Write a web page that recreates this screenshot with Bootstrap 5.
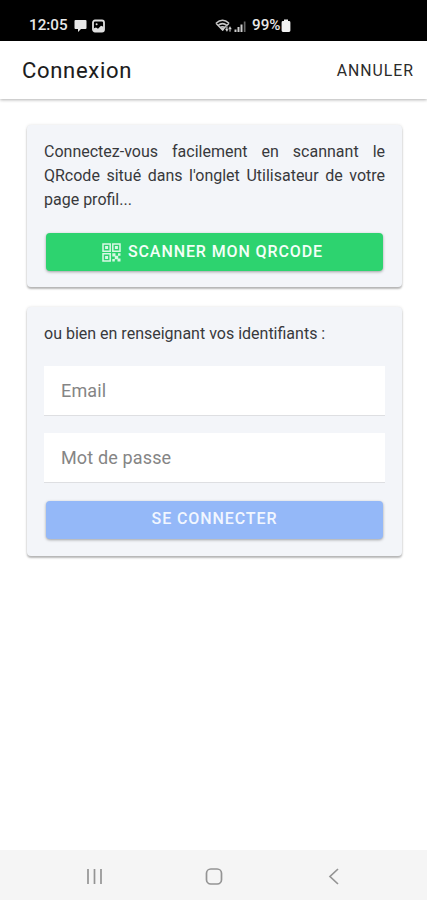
<!DOCTYPE html>
<html lang="fr">
<head>
<meta charset="utf-8">
<meta name="viewport" content="width=device-width, initial-scale=1">
<title>Connexion</title>
<link href="https://cdn.jsdelivr.net/npm/bootstrap@5.3.0/dist/css/bootstrap.min.css" rel="stylesheet">
<style>
body{font-family:Roboto,"Liberation Sans",sans-serif;background:#fff;color:#38393c}
.screen{height:900px}
.status{height:41px;background:#000;color:#e8e8e8;padding:10px 0 0 29px;font-size:15.2px;font-weight:500;line-height:31px}
.status svg,.sysnav svg{display:block;flex:none}
.clock{width:45px}
.signals{margin-left:109px}
.percent{margin:0 1px 0 4px}
.topbar{height:58px;padding:1px 14px 0 22px;box-shadow:0 1px 3px rgba(0,0,0,.3)}
.topbar h1{font-size:22px;font-weight:400;letter-spacing:.7px;color:#1c1c1c;line-height:58px;-webkit-text-stroke:.1px #1c1c1c}
.cancel{font-size:15.8px;letter-spacing:1px;margin-right:-1px;color:#2b2b2b;line-height:58px}
.content{padding:26px 25px 0 27px}
.panel{background:#f3f5f9;border:0;border-radius:4px;padding:15px 17px 17px;box-shadow:0 2px 2px rgba(0,0,0,.26),0 0 3px rgba(0,0,0,.12)}
.panel p{font-size:16px;line-height:24px;margin-bottom:20px}
.panel .justify{text-align:justify}
.intro{padding-bottom:16px}
.intro p{margin-bottom:21px}
.second{margin-top:20px;padding-top:14px}
.second p{padding-top:1px}
.field{height:50px;border:0;border-bottom:1px solid #dedfe2;border-radius:0;background:#fff;padding:0 17px;font-size:18px;letter-spacing:.15px;margin-bottom:17px}
.field::placeholder{color:#858585;opacity:1}
.field + .action{margin-top:1px}
.action{height:38px;margin:0 2px;border:0;border-radius:4px;padding:0;color:#fff;font-size:16px;font-weight:500;letter-spacing:.9px;line-height:36px;box-shadow:0 1px 3px rgba(0,0,0,.35)}
.scan,.scan:hover{background:#2dd36f;color:#f4fff8;padding:0 4px 0 0}
.scan svg{margin-right:7px}
.login,.login:disabled{background:#94b8f8;color:#f1f6ff;opacity:1;padding-bottom:2px;line-height:36px}
.sysnav{height:50px;background:#f5f5f5;padding-top:2px}
</style>
</head>
<body>
<div class="screen d-flex flex-column overflow-hidden">
  <div class="status d-flex align-items-center">
    <span class="clock">12:05</span>
    <svg width="13" height="14" viewBox="0 0 13 14"><path d="M1.500 1h10q1 0 1 1v7q0 1-1 1H7l-3 3v-3H1.500q-1 0-1-1V2q0-1 1-1z" fill="#e8e8e8"/></svg>
    <svg class="ms-1" width="15" height="14" viewBox="0 0 15 14"><rect x="2" y="1.500" width="11" height="11" rx="2" fill="none" stroke="#e0e0e0" stroke-width="1.800"/><path d="M3 12V9.300l2-.8 2 1.200 3-3 2.500 1V12z" fill="#e0e0e0" stroke="none"/><circle cx="5.600" cy="5.200" r="1" fill="#e0e0e0"/></svg>
    <span class="signals d-flex align-items-center">
      <svg width="33" height="16" viewBox="0 0 33 16"><g fill="none" stroke="#c8c8c8" stroke-width="1.500"><path d="M1 5.200q6.500-6 13 0M3 7.600q4.500-4 9 0M5 9.800q2.500-2.200 5 0M1 5.200L7.500 12 14 5.200"/></g><path d="M5 9.500h5L8 13z" fill="#ccc"/><path d="M9.800 10.700h1.400V8.300h1.400v2.400H14L11.900 14zM12.800 11.300L15 8l2 3.300h-1.300v2.500h-1.400v-2.500z" fill="#ddd" stroke="#000" stroke-width=".35"/><path d="M19.500 14v-2.500h2V14zM22.500 14V9h2v5zM25.500 14V6.500h2V14z" fill="#ccc"/><path d="M28.800 14V3.500h1.700V14z" fill="#666"/></svg>
      <span class="percent">99%</span>
      <svg width="10" height="14" viewBox="0 0 10 14"><path d="M3 .5h4V2h1q1.400 0 1.400 1.400v8.200Q9.400 13 8 13H2Q.6 13 .6 11.600V3.400Q.6 2 2 2h1z" fill="#f2f2f2"/></svg>
    </span>
  </div>
  <header class="topbar d-flex justify-content-between flex-shrink-0">
    <h1 class="m-0">Connexion</h1>
    <a class="cancel text-decoration-none" href="#">ANNULER</a>
  </header>
  <main class="content flex-grow-1">
    <section class="panel card intro">
      <p class="justify">Connectez-vous facilement en scannant le QRcode situé dans l'onglet Utilisateur de votre page profil...</p>
      <button class="action scan btn d-flex justify-content-center align-items-center" type="button">
        <svg width="19" height="19" viewBox="0 0 19 19"><g fill="none" stroke="#d9f8e5" stroke-width="1.500"><path d="M1 1h7.200v7.200H1zM10.800 1H18v7.200h-7.200zM1 10.800h7.200V18H1z"/></g><path d="M3.100 3.100h3v3h-3zM12.900 3.100h3v3h-3zM3.100 12.900h3v3h-3zM10.300 10.300h3.200v3.200h-3.200zM12.800 12.800h3.400v3.400h-3.400zM16 10.300h2.500v2.500H16zM10.300 16h2.500v2.500h-2.500zM15.500 15.500h3v3h-3z" fill="#d9f8e5"/></svg>
        <span>SCANNER MON QRCODE</span>
      </button>
    </section>
    <section class="panel card second">
      <p>ou bien en renseignant vos identifiants :</p>
      <input class="field form-control" type="email" placeholder="Email" aria-label="Email">
      <input class="field form-control" type="password" placeholder="Mot de passe" aria-label="Mot de passe">
      <button class="action login btn" type="button" disabled>SE CONNECTER</button>
    </section>
  </main>
  <nav class="sysnav d-flex flex-shrink-0">
    <svg width="427" height="48" viewBox="0 0 427 48"><g fill="none" stroke="#949494" stroke-width="1.700"><path d="M88 17v15M94.500 17v15M101 17v15"/><rect x="206.500" y="17" width="15" height="15" rx="4.300"/><path d="M338 17l-8 7.500 8 7.500"/></g></svg>
  </nav>
</div>
<script src="https://cdn.jsdelivr.net/npm/bootstrap@5.3.0/dist/js/bootstrap.bundle.min.js"></script>
</body>
</html>
